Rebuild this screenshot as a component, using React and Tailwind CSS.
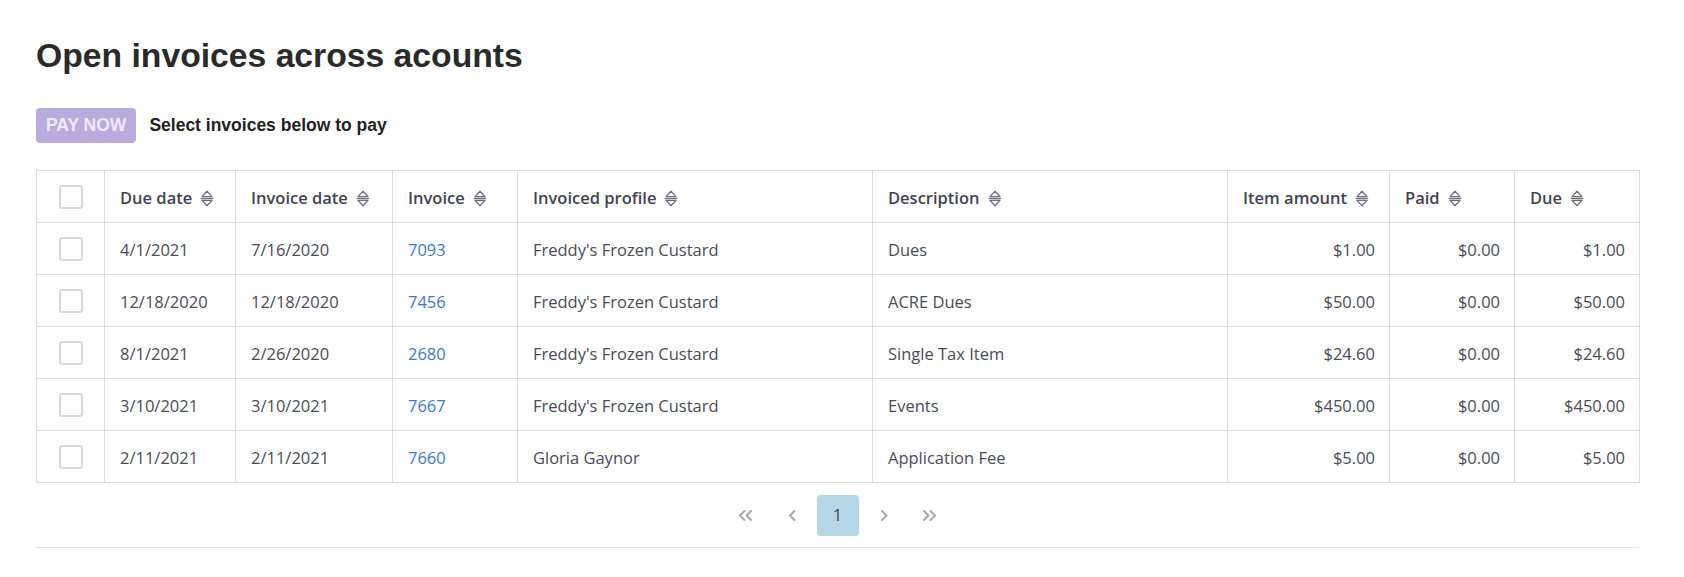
import React from "react";

const rows = [
  { due: "4/1/2021", inv: "7/16/2020", no: "7093", profile: "Freddy's Frozen Custard", desc: "Dues", amt: "$1.00", paid: "$0.00", owed: "$1.00" },
  { due: "12/18/2020", inv: "12/18/2020", no: "7456", profile: "Freddy's Frozen Custard", desc: "ACRE Dues", amt: "$50.00", paid: "$0.00", owed: "$50.00" },
  { due: "8/1/2021", inv: "2/26/2020", no: "2680", profile: "Freddy's Frozen Custard", desc: "Single Tax Item", amt: "$24.60", paid: "$0.00", owed: "$24.60" },
  { due: "3/10/2021", inv: "3/10/2021", no: "7667", profile: "Freddy's Frozen Custard", desc: "Events", amt: "$450.00", paid: "$0.00", owed: "$450.00" },
  { due: "2/11/2021", inv: "2/11/2021", no: "7660", profile: "Gloria Gaynor", desc: "Application Fee", amt: "$5.00", paid: "$0.00", owed: "$5.00" },
];

const columns = [
  { label: "Due date", w: "w-[131px]" },
  { label: "Invoice date", w: "w-[157px]" },
  { label: "Invoice", w: "w-[125px]" },
  { label: "Invoiced profile", w: "w-[355px]" },
  { label: "Description", w: "w-[355px]" },
  { label: "Item amount", w: "w-[162px]" },
  { label: "Paid", w: "w-[125px]" },
  { label: "Due", w: "w-[125px]" },
];

function SortIcon() {
  return (
    <svg width="14" height="17" viewBox="0 0 14 17" fill="none" stroke="#6b6f7b" strokeWidth="1.3" strokeLinejoin="round" className="shrink-0">
      <path d="M2 6.6 L7 1.2 L12 6.6 Z" />
      <path d="M0.8 8.5 H13.2" />
      <path d="M2 10.4 L7 15.8 L12 10.4 Z" />
    </svg>
  );
}

function Checkbox() {
  return <span className="block mx-auto w-[24px] h-[24px] rounded-[3px] border-2 border-[#d6d9df] bg-white" />;
}

function Chevron({ dir, double }) {
  const left = dir === "left";
  return (
    <svg width={double ? 17 : 10} height="13" viewBox={double ? "0 0 17 13" : "0 0 10 13"} fill="none" stroke="#a6a8ae" strokeWidth="2" strokeLinecap="round" strokeLinejoin="round">
      {double ? (
        left ? (
          <>
            <path d="M7.5 2 L3 6.5 L7.5 11" />
            <path d="M14 2 L9.5 6.5 L14 11" />
          </>
        ) : (
          <>
            <path d="M3 2 L7.5 6.5 L3 11" />
            <path d="M9.5 2 L14 6.5 L9.5 11" />
          </>
        )
      ) : left ? (
        <path d="M7.5 2 L3 6.5 L7.5 11" />
      ) : (
        <path d="M3 2 L7.5 6.5 L3 11" />
      )}
    </svg>
  );
}

const cell = "border border-[#dcdcdc] px-[15px] pt-[4px]";
const numCell = "border border-[#dcdcdc] px-[14px] pt-[4px] text-right";

export default function App() {
  return (
    <div className="min-h-[577px] bg-white pl-[36px] pr-[45px] pt-[35px] font-['Open_Sans',sans-serif]">
      {/* Heading */}
      <h1 className="font-['Liberation_Sans',Arial,sans-serif] text-[33.7px] leading-[40px] font-bold text-[#2a2a2a]">
        Open invoices across acounts
      </h1>

      {/* Pay action */}
      <div className="mt-[33px] flex items-center gap-[13px] font-['Liberation_Sans',Arial,sans-serif]">
        <button className="h-[35px] px-[10px] rounded-[4px] bg-[#b9abdd] text-[#eeeaf8] text-[17.5px] font-bold">
          PAY NOW
        </button>
        <span className="text-[17.5px] font-bold text-[#222]">Select invoices below to pay</span>
      </div>

      {/* Invoices table */}
      <table className="mt-[27px] w-full table-fixed border-collapse text-[16.5px]">
        <thead>
          <tr className="h-[52px]">
            <th className="w-[68px] border border-[#dcdcdc]">
              <Checkbox />
            </th>
            {columns.map((c) => (
              <th key={c.label} className={`${c.w} ${cell} text-left font-semibold text-[#43444f]`}>
                <span className="flex items-center gap-[8px]">
                  {c.label}
                  <SortIcon />
                </span>
              </th>
            ))}
          </tr>
        </thead>
        <tbody className="text-[#4b4c57]">
          {rows.map((r) => (
            <tr key={r.no} className="h-[52px]">
              <td className="border border-[#dcdcdc]">
                <Checkbox />
              </td>
              <td className={cell}>{r.due}</td>
              <td className={cell}>{r.inv}</td>
              <td className={`${cell} text-[#3f78c6]`}>{r.no}</td>
              <td className={cell}>{r.profile}</td>
              <td className={cell}>{r.desc}</td>
              <td className={numCell}>{r.amt}</td>
              <td className={numCell}>{r.paid}</td>
              <td className={numCell}>{r.owed}</td>
            </tr>
          ))}
        </tbody>
      </table>

      {/* Pagination */}
      <div className="mt-[12px] mb-[11px] flex justify-center gap-[4px]">
        <span className="w-[42px] h-[41px] flex items-center justify-center"><Chevron dir="left" double /></span>
        <span className="w-[42px] h-[41px] flex items-center justify-center"><Chevron dir="left" /></span>
        <span className="w-[42px] h-[41px] flex items-center justify-center rounded-[4px] bg-[#b5d6e6] text-[16.5px] text-[#4a4a4a]">1</span>
        <span className="w-[42px] h-[41px] flex items-center justify-center"><Chevron dir="right" /></span>
        <span className="w-[42px] h-[41px] flex items-center justify-center"><Chevron dir="right" double /></span>
      </div>
      <div className="border-t border-[#e6e6e6]" />
    </div>
  );
}
